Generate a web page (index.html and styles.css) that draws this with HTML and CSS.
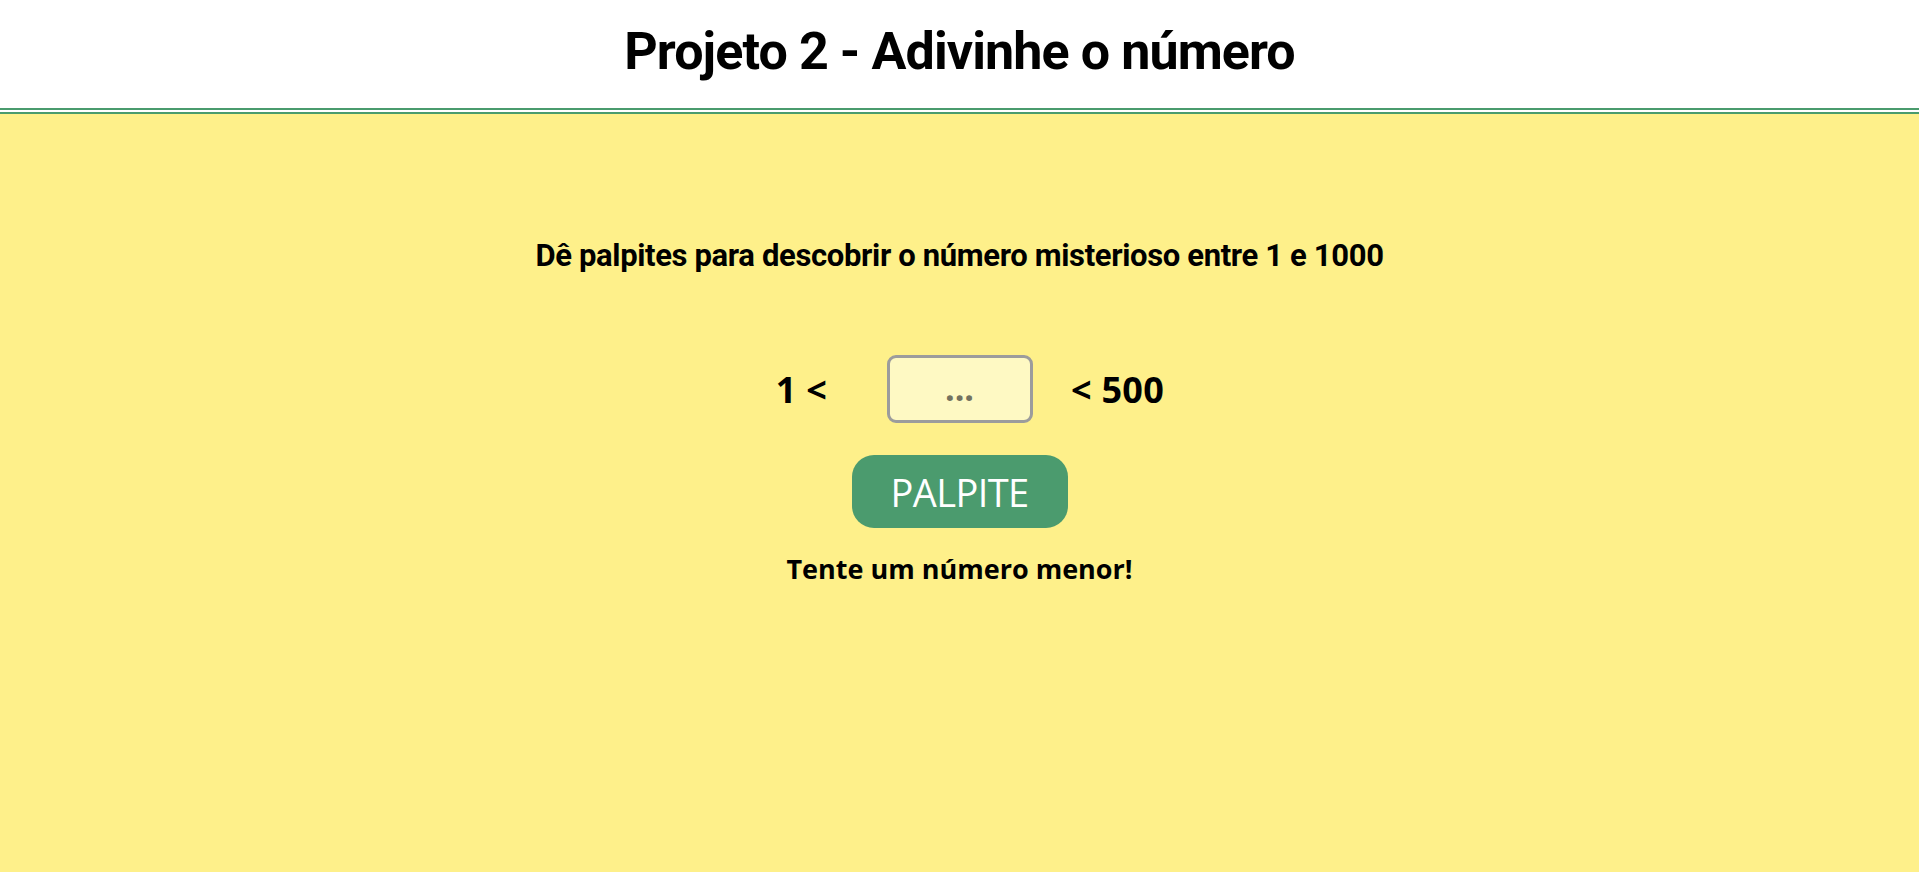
FILE: index.html
```html
<!DOCTYPE html>
<html lang="pt-BR">
<head>
<meta charset="utf-8">
<title>Projeto 2 - Adivinhe o número</title>
<link rel="stylesheet" href="styles.css">
</head>
<body>
<header class="topo">
  <h1 class="titulo">Projeto 2 - Adivinhe o número</h1>
</header>
<main class="jogo">
  <p class="instrucao">Dê palpites para descobrir o número misterioso entre 1 e 1000</p>
  <div class="faixa">
    <span class="limite">1 &lt;</span>
    <input class="palpite" type="text" placeholder="...">
    <span class="limite">&lt; 500</span>
  </div>
  <button class="botao" type="button">PALPITE</button>
  <p class="dica">Tente um número menor!</p>
</main>
</body>
</html>
```
FILE: styles.css
```css
html, body {
  margin: 0;
  padding: 0;
}

body {
  background: #fef08a;
  min-height: 100vh;
  font-family: "Open Sans", "Noto Sans", sans-serif;
  color: #000;
}

.topo {
  background: #ffffff;
  padding: 22px 0 26px;
  border-bottom: 6px double #4a9b6d;
  text-align: center;
}

.titulo {
  margin: 0;
  font-family: Roboto, "Open Sans", sans-serif;
  font-weight: 700;
  font-size: 52px;
  line-height: 60px;
  letter-spacing: -0.9px;
}

.jogo {
  display: flex;
  flex-direction: column;
  align-items: center;
}

.instrucao {
  margin: 124px 0 0;
  font-family: Roboto, "Open Sans", sans-serif;
  font-weight: 700;
  font-size: 31px;
  line-height: 36px;
  letter-spacing: -0.35px;
}

.faixa {
  margin-top: 81px;
  display: flex;
  align-items: center;
  gap: 20px;
}

.limite {
  width: 130px;
  text-align: center;
  font-weight: 700;
  font-size: 36px;
  letter-spacing: 0.3px;
}

.palpite {
  box-sizing: border-box;
  width: 146px;
  height: 68px;
  margin: 0;
  padding: 0 0 2px;
  border: 3px solid #9c9c9c;
  border-radius: 9px;
  background: #fef9c3;
  font-family: "Open Sans", sans-serif;
  font-weight: 700;
  font-size: 34px;
  text-align: center;
  color: #000;
  outline: none;
}

.palpite::placeholder {
  color: #73725f;
  opacity: 1;
}

.botao {
  margin-top: 32px;
  width: 216px;
  height: 73px;
  padding: 0;
  border: none;
  border-radius: 22px;
  background: #4b9b6e;
  color: #ffffff;
  font-family: "Open Sans", sans-serif;
  font-weight: 400;
  font-size: 38px;
  letter-spacing: -0.6px;
  display: flex;
  align-items: center;
  justify-content: center;
  cursor: pointer;
}

.dica {
  margin: 22px 0 0;
  font-weight: 700;
  font-size: 27px;
}
```
